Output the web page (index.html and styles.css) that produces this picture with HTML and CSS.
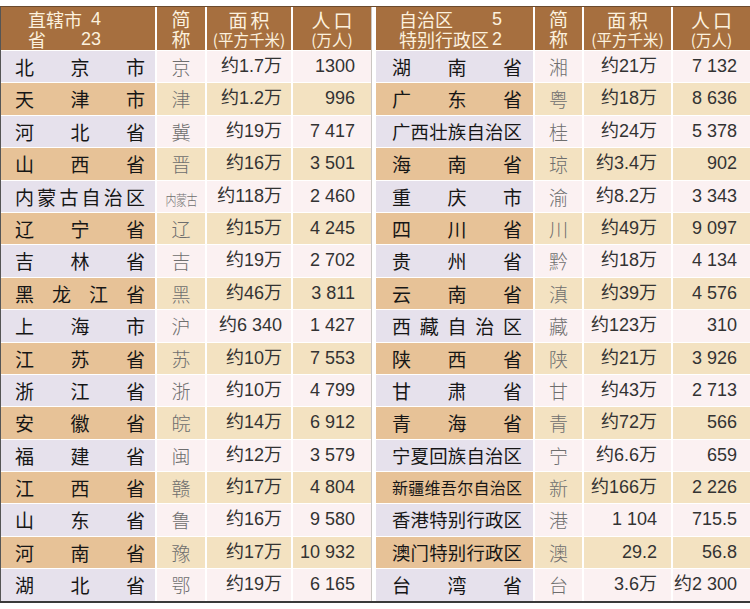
FILE: index.html
```html
<!DOCTYPE html>
<html lang="zh-CN">
<head>
<meta charset="utf-8">
<title>中国省级行政区</title>
<link rel="stylesheet" href="styles.css">
</head>
<body>
<div class="page">
  <div class="board">
    <div class="tbl left">
      <div class="hd">
        <div class="c h hname"><div class="hn"><span>直辖市</span><span>4</span></div><div class="hn"><span>省</span><span>23</span></div></div>
        <div class="c h habbr"><span>简</span><span>称</span></div>
        <div class="c h hcol"><span class="t1">面积</span><span class="t2">(平方千米)</span></div>
        <div class="c h hcol"><span class="t1">人口</span><span class="t2">(万人)</span></div>
      </div>
      <div class="row"><div class="c nm">北京市</div><div class="c ab">京</div><div class="c ar">约1.7万</div><div class="c pp">1300</div></div>
      <div class="row alt"><div class="c nm">天津市</div><div class="c ab">津</div><div class="c ar">约1.2万</div><div class="c pp">996</div></div>
      <div class="row"><div class="c nm">河北省</div><div class="c ab">冀</div><div class="c ar">约19万</div><div class="c pp">7 417</div></div>
      <div class="row alt"><div class="c nm">山西省</div><div class="c ab">晋</div><div class="c ar">约16万</div><div class="c pp">3 501</div></div>
      <div class="row"><div class="c nm">内蒙古自治区</div><div class="c ab"><span class="sq">内蒙古</span></div><div class="c ar">约118万</div><div class="c pp">2 460</div></div>
      <div class="row alt"><div class="c nm">辽宁省</div><div class="c ab">辽</div><div class="c ar">约15万</div><div class="c pp">4 245</div></div>
      <div class="row"><div class="c nm">吉林省</div><div class="c ab">吉</div><div class="c ar">约19万</div><div class="c pp">2 702</div></div>
      <div class="row alt"><div class="c nm">黑龙江省</div><div class="c ab">黑</div><div class="c ar">约46万</div><div class="c pp">3 811</div></div>
      <div class="row"><div class="c nm">上海市</div><div class="c ab">沪</div><div class="c ar">约6 340</div><div class="c pp">1 427</div></div>
      <div class="row alt"><div class="c nm">江苏省</div><div class="c ab">苏</div><div class="c ar">约10万</div><div class="c pp">7 553</div></div>
      <div class="row"><div class="c nm">浙江省</div><div class="c ab">浙</div><div class="c ar">约10万</div><div class="c pp">4 799</div></div>
      <div class="row alt"><div class="c nm">安徽省</div><div class="c ab">皖</div><div class="c ar">约14万</div><div class="c pp">6 912</div></div>
      <div class="row"><div class="c nm">福建省</div><div class="c ab">闽</div><div class="c ar">约12万</div><div class="c pp">3 579</div></div>
      <div class="row alt"><div class="c nm">江西省</div><div class="c ab">赣</div><div class="c ar">约17万</div><div class="c pp">4 804</div></div>
      <div class="row"><div class="c nm">山东省</div><div class="c ab">鲁</div><div class="c ar">约16万</div><div class="c pp">9 580</div></div>
      <div class="row alt"><div class="c nm">河南省</div><div class="c ab">豫</div><div class="c ar">约17万</div><div class="c pp">10 932</div></div>
      <div class="row"><div class="c nm">湖北省</div><div class="c ab">鄂</div><div class="c ar">约19万</div><div class="c pp">6 165</div></div>
    </div>
    <div class="tbl right">
      <div class="hd">
        <div class="c h hname"><div class="hn"><span>自治区</span><span>5</span></div><div class="hn"><span>特别行政区</span><span>2</span></div></div>
        <div class="c h habbr"><span>简</span><span>称</span></div>
        <div class="c h hcol"><span class="t1">面积</span><span class="t2">(平方千米)</span></div>
        <div class="c h hcol"><span class="t1">人口</span><span class="t2">(万人)</span></div>
      </div>
      <div class="row"><div class="c nm">湖南省</div><div class="c ab">湘</div><div class="c ar">约21万</div><div class="c pp">7 132</div></div>
      <div class="row alt"><div class="c nm">广东省</div><div class="c ab">粤</div><div class="c ar">约18万</div><div class="c pp">8 636</div></div>
      <div class="row"><div class="c nm n7">广西壮族自治区</div><div class="c ab">桂</div><div class="c ar">约24万</div><div class="c pp">5 378</div></div>
      <div class="row alt"><div class="c nm">海南省</div><div class="c ab">琼</div><div class="c ar">约3.4万</div><div class="c pp">902</div></div>
      <div class="row"><div class="c nm">重庆市</div><div class="c ab">渝</div><div class="c ar">约8.2万</div><div class="c pp">3 343</div></div>
      <div class="row alt"><div class="c nm">四川省</div><div class="c ab">川</div><div class="c ar">约49万</div><div class="c pp">9 097</div></div>
      <div class="row"><div class="c nm">贵州省</div><div class="c ab">黔</div><div class="c ar">约18万</div><div class="c pp">4 134</div></div>
      <div class="row alt"><div class="c nm">云南省</div><div class="c ab">滇</div><div class="c ar">约39万</div><div class="c pp">4 576</div></div>
      <div class="row"><div class="c nm">西藏自治区</div><div class="c ab">藏</div><div class="c ar">约123万</div><div class="c pp">310</div></div>
      <div class="row alt"><div class="c nm">陕西省</div><div class="c ab">陕</div><div class="c ar">约21万</div><div class="c pp">3 926</div></div>
      <div class="row"><div class="c nm">甘肃省</div><div class="c ab">甘</div><div class="c ar">约43万</div><div class="c pp">2 713</div></div>
      <div class="row alt"><div class="c nm">青海省</div><div class="c ab">青</div><div class="c ar">约72万</div><div class="c pp">566</div></div>
      <div class="row"><div class="c nm n7">宁夏回族自治区</div><div class="c ab">宁</div><div class="c ar">约6.6万</div><div class="c pp">659</div></div>
      <div class="row alt"><div class="c nm n8">新疆维吾尔自治区</div><div class="c ab">新</div><div class="c ar">约166万</div><div class="c pp">2 226</div></div>
      <div class="row"><div class="c nm n7">香港特别行政区</div><div class="c ab">港</div><div class="c ar">1 104</div><div class="c pp">715.5</div></div>
      <div class="row alt"><div class="c nm n7">澳门特别行政区</div><div class="c ab">澳</div><div class="c ar">29.2</div><div class="c pp">56.8</div></div>
      <div class="row"><div class="c nm">台湾省</div><div class="c ab">台</div><div class="c ar">3.6万</div><div class="c pp">约2 300</div></div>
    </div>
  </div>
</div>
</body>
</html>
```

FILE: styles.css
```css
* { box-sizing: border-box; margin: 0; padding: 0; }
html, body { background: #ffffff; }
body {
  font-family: "Liberation Sans", "Noto Sans CJK SC", sans-serif;
  color: #2e2e2e;
}
.page { padding-top: 6px; }
.board {
  display: flex;
  border-top: 1px solid #6a4a2e;
  border-bottom: 2px solid #3a3a3a;
  background: #ffffff;
}
.tbl {
  display: grid;
  column-gap: 2px;
  row-gap: 1px;
  grid-template-rows: 43px;
  grid-auto-rows: 31.4px;
}
.left {
  grid-template-columns: 154px 48px 84px 78px;
  border-left: 1px solid #555;
  border-right: 1px solid #cbc6c2;
  margin-right: 4px;
}
.right { grid-template-columns: 157px 47px 87px 77px; }
.hd, .row { display: contents; }

/* header */
.h {
  background: #a66f3f;
  color: #fcf1de;
  font-family: "Noto Sans CJK SC", sans-serif;
  display: flex;
  flex-direction: column;
  justify-content: center;
  align-items: center;
}
.hname { align-items: flex-start; font-size: 18px; line-height: 20px; }
.left .hname { padding-left: 27px; }
.right .hname { padding-left: 23px; }
.hn { display: flex; justify-content: space-between; }
.left .hn { width: 73px; }
.right .hn { width: 103px; }
.hn span:last-child { font-family: "Liberation Sans", sans-serif; }
.habbr { font-size: 19px; line-height: 20px; }
.t1 { font-size: 19px; line-height: 21px; letter-spacing: 3px; padding-left: 3px; }
.t2 { font-size: 15.5px; line-height: 19px; }

/* body cells */
.row > .c { background: #fbf1f2; line-height: 31px; white-space: nowrap; }
.row > .nm { background: #e6e1ec; }
.row.alt > .c { background: #f3e2c1; }
.row.alt > .nm { background: #e7c297; }

.nm {
  font-family: "Noto Sans CJK SC", sans-serif;
  font-size: 19px;
  font-weight: 400;
  color: #161616;
  text-align: justify;
  text-align-last: justify;
}
.left .nm { padding: 0 10px 0 14px; }
.right .nm { padding: 0 11px 0 16px; }
.nm.n7 { font-size: 18.4px; }
.nm.n8 { font-size: 16px; }

.ab {
  font-family: "Noto Sans CJK SC", sans-serif;
  text-align: center;
  color: #6e6e6e;
  font-weight: 300;
  font-size: 19px;
}
.sq {
  display: inline-block;
  font-size: 14px;
  transform: scaleX(0.78);
  transform-origin: center;
  letter-spacing: -0.5px;
}
.ar, .pp { text-align: right; font-size: 18px; color: #333; }
.left .ar { padding-right: 9px; }
.right .ar { padding-right: 14px; }
.left .pp { padding-right: 16px; }
.right .pp { padding-right: 13px; }
```
